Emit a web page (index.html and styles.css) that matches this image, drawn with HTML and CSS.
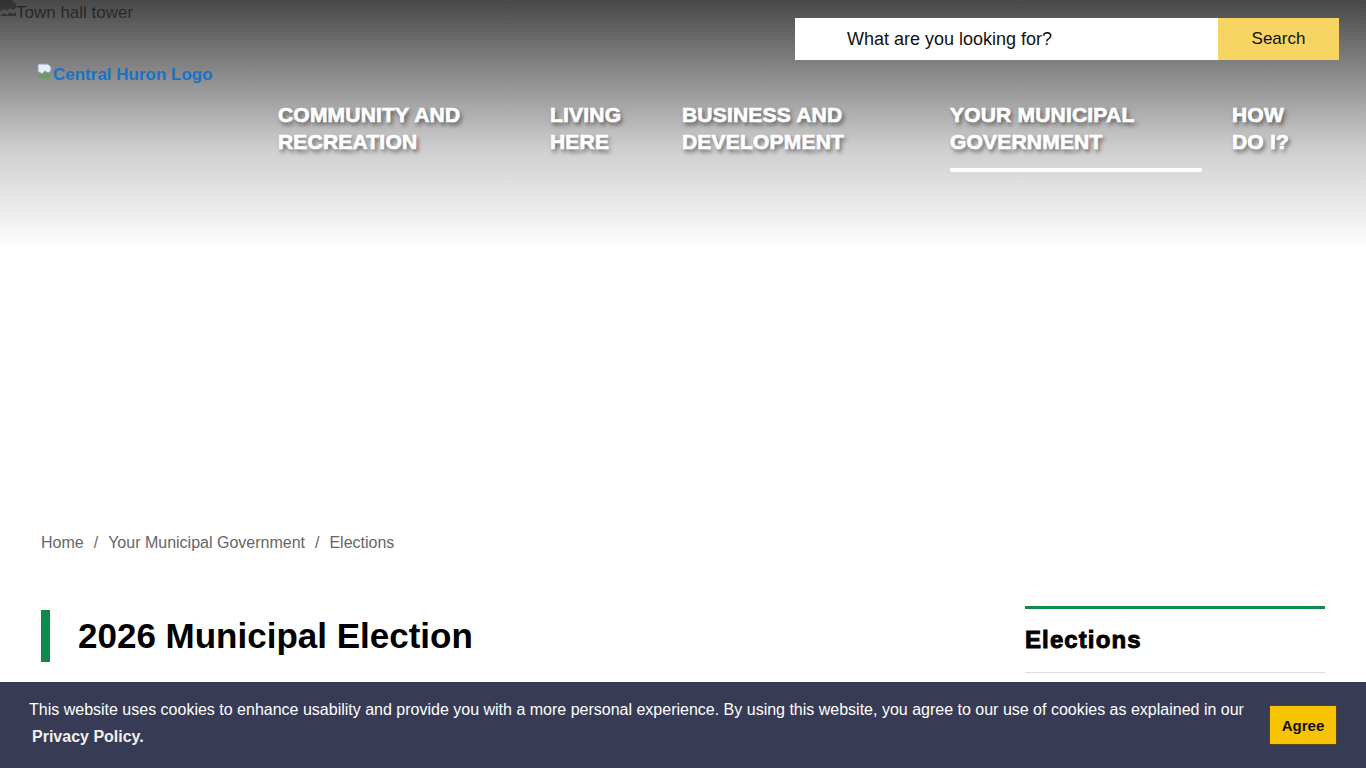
FILE: index.html
```html
<!DOCTYPE html>
<html lang="en">
<head>
<meta charset="utf-8">
<title>2026 Municipal Election - Central Huron</title>
<link rel="stylesheet" href="styles.css">
</head>
<body>
<section class="hero">
  <div class="hero-img"><svg class="broken" width="16" height="16" viewBox="0 0 16 16"><path d="M0 0h12l4 4v4l-3 2-3-2-3 3-3-2-4 3z" fill="#5c6470"/><path d="M0 16l4-3 3 2 3-3 3 2 3-2v4z" fill="#3d4a44"/></svg><span class="alt-text">Town hall tower</span></div>
  <header class="site-header">
    <div class="search-row">
      <form class="search">
        <span class="search-input">What are you looking for?</span>
        <span class="search-btn">Search</span>
      </form>
    </div>
    <div class="brand-row">
      <a class="logo" href="#"><svg class="broken" width="16" height="16" viewBox="0 0 16 16"><path d="M1 1h10l3 3v4l-3 2-3-2-3 3-3-2-1 1z" fill="#e8eef5" stroke="#8a9bb0" stroke-width="1"/><path d="M1 14l3-3 3 2 3-3 3 2v3H1z" fill="#5da64a"/></svg>Central Huron Logo</a>
    </div>
    <nav class="main-nav">
      <a href="#" class="nav-item">COMMUNITY AND<br>RECREATION</a>
      <a href="#" class="nav-item">LIVING<br>HERE</a>
      <a href="#" class="nav-item">BUSINESS AND<br>DEVELOPMENT</a>
      <a href="#" class="nav-item active">YOUR MUNICIPAL<br>GOVERNMENT</a>
      <a href="#" class="nav-item">HOW<br>DO I?</a>
    </nav>
  </header>
</section>

<div class="page">
  <div class="breadcrumb">
    <a href="#">Home</a><span class="sep">/</span><a href="#">Your Municipal Government</a><span class="sep">/</span><span>Elections</span>
  </div>
  <div class="content">
    <main class="main-col">
      <h1 class="page-title">2026 Municipal Election</h1>
    </main>
    <aside class="sidebar">
      <h2 class="side-title">Elections</h2>
    </aside>
  </div>
</div>

<div class="cookie-bar">
  <p class="cookie-text">This website uses cookies to enhance usability and provide you with a more personal experience. By using this website, you agree to our use of cookies as explained in our <a href="#" class="cookie-link">Privacy Policy.</a></p>
  <button class="agree">Agree</button>
</div>
</body>
</html>
```

FILE: styles.css
```css
* { box-sizing: border-box; }
html, body { margin: 0; padding: 0; }
body {
  font-family: "Liberation Sans", Arial, sans-serif;
  color: #000;
  background: #fff;
  height: 768px;
  overflow: hidden;
}
a { text-decoration: none; }

.hero {
  position: relative;
  height: 510px;
}
.hero-img {
  font-size: 17px;
  line-height: 24px;
  color: #000;
  display: flex;
  align-items: flex-start;
}
.alt-text { padding-top: 1px; }
.broken { flex: none; }

.site-header {
  position: absolute;
  top: 0;
  left: 0;
  right: 0;
  height: 250px;
  background: linear-gradient(to bottom, rgba(40,40,40,0.85) 0%, rgba(90,90,90,0.7) 30%, rgba(160,160,160,0.5) 60%, rgba(255,255,255,0) 100%);
  display: flex;
  flex-direction: column;
}
.search-row {
  display: flex;
  justify-content: flex-end;
  padding: 18px 27px 0 0;
}
.search {
  display: flex;
  height: 42px;
  margin: 0;
}
.search-input {
  width: 423px;
  background: #fff;
  padding-left: 52px;
  font-size: 18px;
  line-height: 42px;
  color: #111;
}
.search-btn {
  width: 121px;
  background: #f8d562;
  font-size: 17px;
  line-height: 41px;
  text-align: center;
  color: #111;
}
.brand-row {
  padding: 3px 0 0 37px;
  height: 41px;
}
.logo {
  display: inline-flex;
  align-items: flex-start;
  color: #1a72c6;
  font-weight: 700;
  font-size: 17px;
  line-height: 24px;
}
.main-nav {
  display: grid;
  grid-template-columns: 242px 102px 239px 251px auto;
  column-gap: 30px;
  padding-left: 278px;
}
.nav-item {
  color: #fff;
  font-weight: 900;
  font-size: 21px;
  line-height: 27px;
  letter-spacing: 0.2px;
  -webkit-text-stroke: 0.7px #fff;
  text-shadow: 2px 3px 4px rgba(0,0,0,0.55);
  padding-bottom: 13px;
  border-bottom: 4px solid transparent;
}
.nav-item.active {
  border-bottom: 4px solid #fff;
  border-radius: 2px;
  margin-left: -1px;
}

.page {
  padding: 21px 41px 0 41px;
}
.breadcrumb {
  font-size: 16px;
  line-height: 24px;
  color: #666;
}
.breadcrumb a { color: #666; }
.sep { padding: 0 10px; }

.content {
  display: flex;
  justify-content: space-between;
  margin-top: 51px;
}
.main-col { flex: 1; }
.page-title {
  margin: 4px 0 0 0;
  border-left: 9px solid #0e8a4e;
  padding-left: 28px;
  font-size: 35px;
  line-height: 52px;
  font-weight: 700;
}
.sidebar {
  width: 300px;
  border-top: 3px solid #0e8a4e;
}
.side-title {
  margin: 0;
  font-size: 24px;
  font-weight: 900;
  line-height: 28px;
  letter-spacing: 1.1px;
  padding: 17px 0 18px;
  border-bottom: 1px solid #ddd;
  -webkit-text-stroke: 0.9px #000;
}

.cookie-bar {
  position: fixed;
  left: 0;
  right: 0;
  bottom: 0;
  height: 86px;
  background: #383b55;
  display: flex;
  align-items: flex-start;
  justify-content: space-between;
  padding: 14px 29px 0 29px;
}
.cookie-text {
  margin: 0;
  width: 1225px;
  color: #fff;
  font-size: 16px;
  line-height: 27px;
}
.cookie-link {
  color: #f0f0f0;
  font-weight: 700;
  padding-left: 3px;
}
.agree {
  margin-top: 9px;
  width: 68px;
  height: 40px;
  background: #f8c300;
  border: 1px solid #5a4410;
  font-family: "Liberation Sans", Arial, sans-serif;
  font-weight: 700;
  font-size: 15px;
  color: #111;
  padding: 0;
}
```
